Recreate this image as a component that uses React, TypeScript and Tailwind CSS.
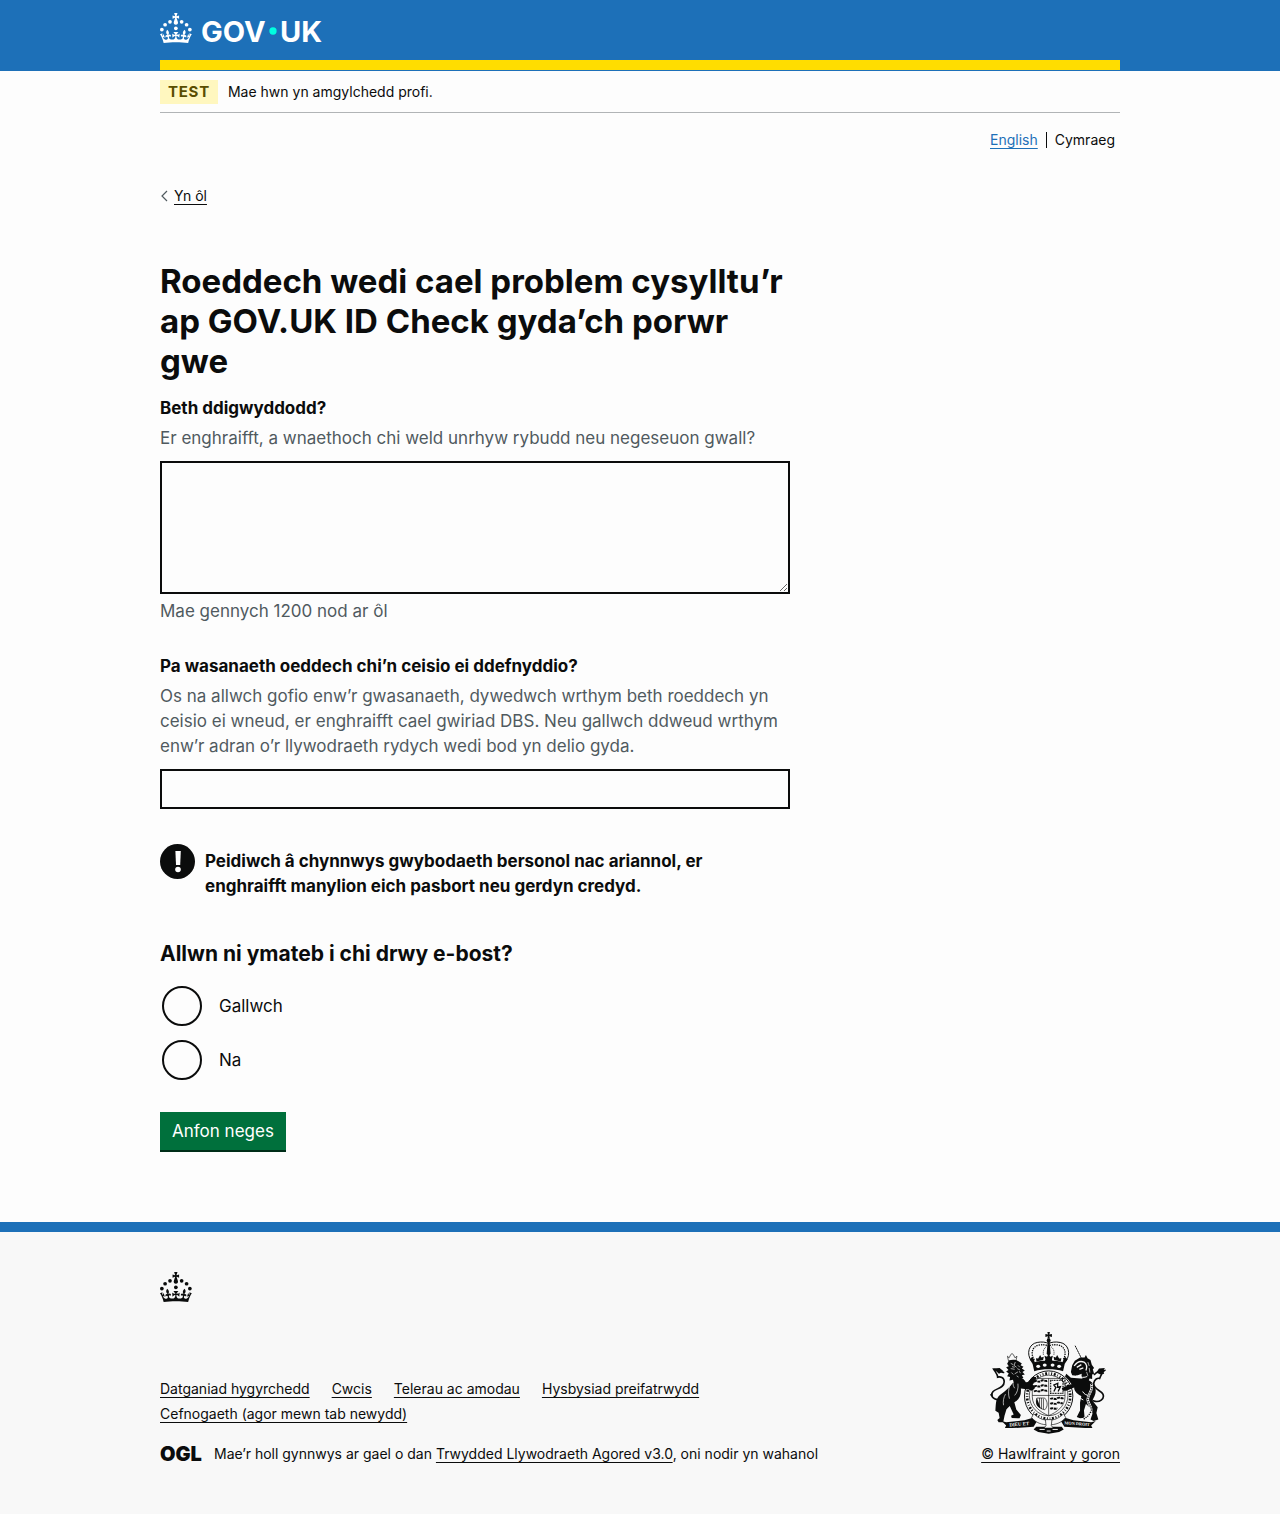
import React from 'react';

const focusable =
  'focus:outline-3 focus:outline-[#ffdd00] focus:bg-[#ffdd00] focus:text-[#0b0c0c]';

function CrownShape() {
  return (
    <g fill="currentColor">
      <circle cx="20" cy="17.6" r="3.7" />
      <circle cx="10.2" cy="23.5" r="3.7" />
      <circle cx="3.7" cy="33.2" r="3.7" />
      <circle cx="31.7" cy="30.6" r="3.7" />
      <circle cx="43.3" cy="17.6" r="3.7" />
      <circle cx="53.2" cy="23.5" r="3.7" />
      <circle cx="59.7" cy="33.2" r="3.7" />
      <path d="M33.1,9.8c.2-.1.3-.3.5-.5l4.6,2.4v-6.8l-4.6,1.5c-.1-.2-.3-.3-.5-.5l1.9-5.9h-6.7l1.9,5.9c-.2.1-.3.3-.5.5l-4.6-1.5v6.8l4.6-2.4c.1.2.3.3.5.5l-2.6,8c-.9,2.8,1.2,5.7,4.1,5.7h0c3,0,5.1-2.9,4.1-5.7l-2.6-8ZM37,37.9s-3.4,3.8-4.1,6.1c2.2,0,4.2-.5,6.4-2.8l-.7,8.5c-2-2.8-4.4-4.1-5.7-3.8.1,3.1.5,6.7,5.8,7.2,3.7.3,6.7-1.5,7-3.8.4-2.6-2-4.3-3.7-1.6-1.4-4.5,2.4-6.1,4.9-3.2-1.9-4.5-1.8-7.7,2.4-10.9,3,4,2.6,7.3-1.2,11.1,2.4-1.3,6.2,0,4,4.6-1.2-2.8-3.7-2.2-4.2.2-.3,1.7.7,3.7,3,4.2,1.9.3,4.7-.9,7-5.9-1.3,0-2.4.7-3.9,1.7l2.4-8c.6,2.3,1.4,3.7,2.2,4.5.6-1.6.5-2.8,0-5.3l5,1.8c-2.6,3.6-5.2,8.7-7.3,17.5-7.4-1.1-15.7-1.7-24.5-1.7h0c-8.8,0-17.1.6-24.5,1.7-2.1-8.9-4.7-13.9-7.3-17.5l5-1.8c-.5,2.5-.6,3.7,0,5.3.8-.8,1.6-2.3,2.2-4.5l2.4,8c-1.5-1-2.6-1.7-3.9-1.7,2.3,5,5.2,6.2,7,5.9,2.3-.4,3.3-2.4,3-4.2-.5-2.4-3-3.1-4.2-.2-2.2-4.6,1.6-6,4-4.6-3.7-3.7-4.2-7.1-1.2-11.1,4.2,3.2,4.3,6.4,2.4,10.9,2.5-2.8,6.3-1.3,4.9,3.2-1.8-2.7-4.1-1-3.7,1.6.3,2.3,3.3,4.1,7,3.8,5.4-.5,5.7-4.2,5.8-7.2-1.3-.2-3.7,1-5.7,3.8l-.7-8.5c2.2,2.3,4.2,2.7,6.4,2.8-.7-2.3-4.1-6.1-4.1-6.1h10.6,0Z" />
    </g>
  );
}

function GovUkLogo() {
  return (
    <svg
      viewBox="0 0 324 60"
      className="block h-[30px] w-[162px] overflow-visible text-white"
      role="img"
      aria-label="GOV.UK"
    >
      <CrownShape />
      <text x="82" y="58" fill="currentColor" fontFamily="Inter, sans-serif" fontWeight="700" fontSize="58">
        GOV
      </text>
      <circle cx="226" cy="36" r="7.3" fill="#00ffe0" />
      <text x="240" y="58" fill="currentColor" fontFamily="Inter, sans-serif" fontWeight="700" fontSize="58">
        UK
      </text>
    </svg>
  );
}

function RoyalArms() {
  return (
    <svg viewBox="27 18 354 312" className="block h-[102px] w-[116px] text-[#0b0c0c]" aria-hidden="true">
      {/* crown */}
      <g fill="currentColor">
        <path d="M202 18h8l-2 8 8-2v9l-8-2 2 8h-8l2-8-8 2v-9l8 2z" />
        <circle cx="206" cy="44" r="6" />
        <path d="M203 48h6l3 36-6 10-6-10z" />
        <path d="M156 112c30-9 70-9 100 0l-6 26c-26-8-62-8-88 0z" />
        <path d="M206 86l5 8 8-3-3 10 2 8h-24l2-8-3-10 8 3zM180 88l4 8 7-2-2 10-20 4-2-10 7 1zM232 88l-4 8-7-2 2 10 20 4 2-10-7 1zM156 94l4 6 4 12-8 2-8-13zM256 94l-4 6-4 12 8 2 8-13z" />
      </g>
      <g fill="none" stroke="currentColor">
        <path d="M154 108c-18-24-8-54 17-58 14-3 26-1 35 3 9-4 21-6 35-3 25 4 35 34 17 58" strokeWidth="3" />
        <path d="M162 104c-13-22-5-42 14-46 12-2 23-1 30 3 7-4 18-5 30-3 19 4 27 24 14 46" strokeWidth="4" strokeDasharray="4 3" />
        <path d="M190 88c-2-14 2-20 10-26M222 88c2-14-2-20-10-26" strokeWidth="2" strokeDasharray="4 2" />
      </g>
      <g fill="#f8f8f8">
        <ellipse cx="174" cy="123" rx="6" ry="5" />
        <ellipse cx="194" cy="119" rx="6" ry="5" />
        <ellipse cx="218" cy="119" rx="6" ry="5" />
        <ellipse cx="238" cy="123" rx="6" ry="5" />
      </g>

      {/* garter and shield */}
      <ellipse cx="206" cy="214" rx="74" ry="77" fill="#f8f8f8" stroke="currentColor" strokeWidth="3" />
      <ellipse cx="206" cy="214" rx="66" ry="69" fill="none" stroke="currentColor" strokeWidth="8" strokeDasharray="3 5 6 5 2 6" />
      <ellipse cx="206" cy="212" rx="59" ry="62" fill="#f8f8f8" stroke="currentColor" strokeWidth="2" />
      <g stroke="currentColor" fill="none">
        <path d="M156 160h100v56c0 30-26 48-50 58-24-10-50-28-50-58z" strokeWidth="2" />
        <path d="M206 160v112M156 212h100" strokeWidth="2" />
        <path d="M161 170c9-6 13 4 21-2s13 2 20-1M161 185c9-6 13 4 21-2s13 2 20-1M161 200c9-6 13 4 21-2s13 2 20-1" strokeWidth="6" strokeDasharray="9 2" />
        <path d="M211 223c9-6 13 4 21-2s13 2 20-1M211 238c9-6 13 4 20-2s10 2 18-1M211 253c7-5 12 3 22-2" strokeWidth="6" strokeDasharray="9 2" />
        <path d="M212 166h38v40h-38z" strokeWidth="4" strokeDasharray="3 2" />
        <path d="M222 200l6-12-6-8 12-5-1 12 9-2-7 15" strokeWidth="4" />
        <path d="M170 220c-6 18 6 32 24 36 10-10 10-24 0-36zM178 220v30M184 220v34M190 222v32" strokeWidth="2" />
      </g>
      <path d="M170 220c-6 16 0 28 12 32z" fill="currentColor" />

      {/* lion */}
      <g fill="currentColor">
        <path d="M80 92l5 5 5-10 4-3 4 3 5 10 6-5-3 14H83z" fill="none" stroke="currentColor" strokeWidth="2" />
        <path d="M84 106c10-5 24-3 31 2l9 6-4 6 9 4-5 6 9 6-7 4 7 8-9 2 5 9-10 1 2 10-11-3-8 6-5-9-11 2 2-10-9-3 5-8-8-6 7-5-7-8 8-3-5-8z" />
        <path d="M98 156c20-4 34 6 38 16l20 8c8 0 10 6 6 12l-8 6-9-4-24-3c2 18-4 34-20 42l6 22 14 17-4 10-24-1-2-7 8-4-12-26-10 10-6 20-4 20-14 0-4-7 7-6-3-16-10-6c2-20 0-36 14-48 14-10 26-20 41-39z" />
        <path d="M120 178l24-8 12-14 12 0-2 10-14 18-20 6z" />
      </g>
      <path d="M56 226c-22-2-30-14-20-26 10-10 34-10 34-30 0-14-12-16-20-14 0-8-6-14-12-24 16 2 22 8 30 10" fill="none" stroke="currentColor" strokeWidth="5" strokeLinecap="round" />
      <path d="M36 130l20-2 12 10-14 8zM34 204l-8 6 10 8z" fill="currentColor" />
      <g stroke="#f8f8f8" strokeWidth="2" fill="none">
        <path d="M90 114l8 4M104 110l-4 10 8 6M90 130l12 2M112 120l6 6M102 146l10-6M94 124l8 2M116 138l4 6M92 142l6 6M108 152l6 4M110 130l8 4" />
        <path d="M88 180c-6 14-6 28-2 42M112 176c2 14-2 28-10 36M74 208c-6 10-8 22-6 34M98 170c-2 8 0 14 4 20" />
      </g>

      {/* unicorn */}
      <path d="M287 60l20 40" stroke="currentColor" strokeWidth="3" strokeDasharray="5 1" fill="none" />
      <g fill="currentColor">
        <path d="M278 120l8-14 16-10 14 0 4-8 5 10 9 6 4 14 7 10-4 4 4 14-6 2 0 14-8-2-4 12-10 0c-8-10-12-16-10-26l-16 6-13-2-4-10z" />
        <path d="M266 164l-10-10 4-8 14 12 30 2c24 2 38 10 44 26 6 20-4 30-8 42l16 20-4 18 6 20-14 4-10-4 6-18-2-14-18-16-6 20 2 22-14 2-10-4 10-20 0-24 4-20c-14-6-22-16-22-26l-24 10-10 0-4-8 8-4 22-8z" />
      </g>
      <path d="M342 228c20 8 36-6 30-20-6-12-30-14-28-34 2-12 12-16 18-14 4-8 4-16 14-24-14 0-22 2-30 12" fill="none" stroke="currentColor" strokeWidth="5" strokeLinecap="round" />
      <path d="M352 142l8-12 18-2-6 10 4 8-12 2z" fill="currentColor" />
      <g stroke="#f8f8f8" fill="none">
        <path d="M284 122c8-12 20-16 30-12 8 6 10 16 6 26M292 126l14-8M300 132l12-4" strokeWidth="4" />
        <path d="M326 110l4 12M330 128l2 14M322 140l4 12" strokeWidth="2" />
        <path d="M290 152c14 6 26 6 34 2M310 200c4 8 12 12 20 12M302 220l10 6" strokeWidth="3" />
      </g>
      <path d="M336 176c10 20-14 34-10 52s16 22 8 36-14 14-22 22" fill="none" stroke="#f8f8f8" strokeWidth="8" />
      <path d="M336 176c10 20-14 34-10 52s16 22 8 36-14 14-22 22" fill="none" stroke="currentColor" strokeWidth="4" strokeDasharray="4 3" />

      {/* compartment and motto */}
      <g fill="currentColor">
        <path d="M62 290l14 4 56-6 34-10 6 10-12 20-66 4-22 0 4-8z" />
        <path d="M350 290l-14 4-54-6-34-10-6 10 12 20 64 4 22 0-4-8z" />
        <path d="M168 308h78l6 8-14 8-32 5-32-5-14-8z" />
      </g>
      <path d="M160 268c14 14 30 20 46 20s32-6 46-20l6 12c-14 16-30 22-52 22s-38-6-52-22z" fill="#f8f8f8" stroke="currentColor" strokeWidth="2" />
      <path d="M196 286h20l-2 18 6 8h-28l6-8z" fill="#f8f8f8" stroke="currentColor" strokeWidth="2" />
      <path d="M178 316h16M218 316h16M200 321h12" stroke="#f8f8f8" strokeWidth="3" />
      <text x="86" y="307" fill="#f8f8f8" fontFamily="Liberation Serif, serif" fontWeight="700" fontSize="15" transform="rotate(-4 86 307)">
        DIEU ET
      </text>
      <text x="254" y="300" fill="#f8f8f8" fontFamily="Liberation Serif, serif" fontWeight="700" fontSize="13" transform="rotate(4 254 300)">
        MON DROIT
      </text>
    </svg>
  );
}

function FooterLink({ children }: { children: React.ReactNode }) {
  return (
    <a href="#" className={`underline decoration-1 underline-offset-3 hover:decoration-3 ${focusable}`}>
      {children}
    </a>
  );
}

const footerLinks = [
  'Datganiad hygyrchedd',
  'Cwcis',
  'Telerau ac amodau',
  'Hysbysiad preifatrwydd',
  'Cefnogaeth (agor mewn tab newydd)',
];

const replyOptions = [
  { id: 'reply-yes', value: 'yes', label: 'Gallwch' },
  { id: 'reply-no', value: 'no', label: 'Na' },
];

export default function App() {
  return (
    <div className="min-h-screen bg-[#fdfdfd] font-['Inter',sans-serif] text-[17px] leading-[25px] text-[#0b0c0c]">
      <header className="bg-[#1d70b8] px-4 pb-px">
        <div className="mx-auto max-w-[960px] border-b-10 border-[#ffdd00] pt-[13px] pb-[17px]">
          <a href="#" className="inline-block align-top">
            <GovUkLogo />
          </a>
        </div>
      </header>

      <div className="px-4">
        <div className="mx-auto max-w-[960px]">
          <div className="flex items-center gap-2.5 border-b border-[#b1b4b6] pt-[9px] pb-2 text-sm">
            <strong className="bg-[#fff7bf] px-2 py-0.5 text-[15px] leading-5 font-bold tracking-wider text-[#594d00]">
              TEST
            </strong>
            <span>Mae hwn yn amgylchedd profi.</span>
          </div>

          <nav aria-label="Iaith" className="mt-[17px] flex justify-end pr-[5px] text-sm">
            <a
              href="#"
              lang="en"
              className={`text-[#1d70b8] underline decoration-1 underline-offset-3 ${focusable}`}
            >
              English
            </a>
            <span className="my-0.5 ml-2 border-l border-[#0b0c0c] pl-2 leading-4">Cymraeg</span>
          </nav>

          <a href="#" className={`mt-9 inline-flex items-center gap-1.5 text-sm ${focusable}`}>
            <svg viewBox="0 0 8 12" className="h-3 w-2" fill="none" stroke="#505a5f" strokeWidth="1.2" aria-hidden="true">
              <path d="M7 1 2 6l5 5" />
            </svg>
            <span className="underline decoration-1 underline-offset-3">Yn ôl</span>
          </a>

          <main className="max-w-[630px] pt-[52px] pb-[72px]">
            <h1 className="mb-[15px] text-[33px] leading-10 font-bold">
              Roeddech wedi cael problem cysylltu’r
              <br />
              ap GOV.UK ID Check gyda’ch porwr
              <br />
              gwe
            </h1>

            <form onSubmit={(event) => event.preventDefault()}>
              <label htmlFor="what-happened" className="mb-[5px] block font-bold">
                Beth ddigwyddodd?
              </label>
              <p id="what-happened-hint" className="mb-2.5 text-[#505a5f]">
                Er enghraifft, a wnaethoch chi weld unrhyw rybudd neu negeseuon gwall?
              </p>
              <textarea
                id="what-happened"
                rows={5}
                aria-describedby="what-happened-hint what-happened-count"
                className="mb-[5px] block h-[133px] w-full resize-y border-2 border-[#0b0c0c] p-[5px] focus:outline-3 focus:outline-[#ffdd00]"
              />
              <p id="what-happened-count" className="mb-[30px] text-[#505a5f]">
                Mae gennych 1200 nod ar ôl
              </p>

              <label htmlFor="service" className="mb-[5px] block font-bold">
                Pa wasanaeth oeddech chi’n ceisio ei ddefnyddio?
              </label>
              <p id="service-hint" className="mb-2.5 text-[#505a5f]">
                Os na allwch gofio enw’r gwasanaeth, dywedwch wrthym beth roeddech yn ceisio ei wneud, er
                enghraifft cael gwiriad DBS. Neu gallwch ddweud wrthym enw’r adran o’r llywodraeth rydych wedi
                bod yn delio gyda.
              </p>
              <input
                id="service"
                type="text"
                aria-describedby="service-hint"
                className="mb-[35px] block h-10 w-full border-2 border-[#0b0c0c] p-[5px] focus:outline-3 focus:outline-[#ffdd00]"
              />

              <div className="mb-10 flex gap-2.5">
                <svg viewBox="0 0 35 35" className="size-[35px] shrink-0" aria-hidden="true">
                  <circle cx="17.5" cy="17.5" r="17.5" fill="#0b0c0c" />
                  <path d="M15.4 7h5.4l-.6 14h-4.2z" fill="#fff" />
                  <circle cx="18" cy="25.5" r="2.8" fill="#fff" />
                </svg>
                <strong className="max-w-[540px] pt-[5px] font-bold">
                  Peidiwch â chynnwys gwybodaeth bersonol nac ariannol, er enghraifft manylion eich pasbort neu
                  gerdyn credyd.
                </strong>
              </div>

              <fieldset>
                <legend className="mb-[17px] text-[21px] leading-[30px] font-bold">
                  Allwn ni ymateb i chi drwy e-bost?
                </legend>
                <div className="flex flex-col gap-3.5">
                  {replyOptions.map((option) => (
                    <div key={option.id} className="flex items-center pl-0.5">
                      <input
                        id={option.id}
                        type="radio"
                        name="reply"
                        value={option.value}
                        className="size-10 appearance-none rounded-full border-2 border-[#0b0c0c] checked:border-[12px] focus:outline-3 focus:outline-[#ffdd00]"
                      />
                      <label htmlFor={option.id} className="px-[17px]">
                        {option.label}
                      </label>
                    </div>
                  ))}
                </div>
              </fieldset>

              <button
                type="submit"
                className="mt-8 block h-[38px] bg-[#00703c] px-3 text-white shadow-[0_2px_0_#002d18] hover:bg-[#005a30]"
              >
                Anfon neges
              </button>
            </form>
          </main>
        </div>
      </div>

      <footer className="border-t-10 border-[#1d70b8] bg-[#f8f8f8] px-4 pt-10 pb-[50px] text-sm leading-5">
        <div className="mx-auto max-w-[960px]">
          <svg viewBox="0 0 64 60" className="block h-[30px] w-8" aria-hidden="true">
            <CrownShape />
          </svg>
          <div className="mt-[30px] flex flex-wrap items-end justify-between gap-y-5">
            <div>
              <ul className="mb-5 flex max-w-[640px] flex-wrap gap-x-[22px] gap-y-[5px]">
                {footerLinks.map((label) => (
                  <li key={label}>
                    <FooterLink>{label}</FooterLink>
                  </li>
                ))}
              </ul>
              <p className="flex items-center gap-3">
                <span className="w-[42px] shrink-0 text-[20px] font-black" aria-label="OGL">
                  OGL
                </span>
                <span>
                  Mae’r holl gynnwys ar gael o dan <FooterLink>Trwydded Llywodraeth Agored v3.0</FooterLink>, oni
                  nodir yn wahanol
                </span>
              </p>
            </div>
            <a
              href="#"
              className="flex w-[145px] flex-col gap-2.5 text-right underline decoration-1 underline-offset-3 hover:decoration-3"
            >
              <span className="self-center">
                <RoyalArms />
              </span>
              <span>© Hawlfraint y goron</span>
            </a>
          </div>
        </div>
      </footer>
    </div>
  );
}
